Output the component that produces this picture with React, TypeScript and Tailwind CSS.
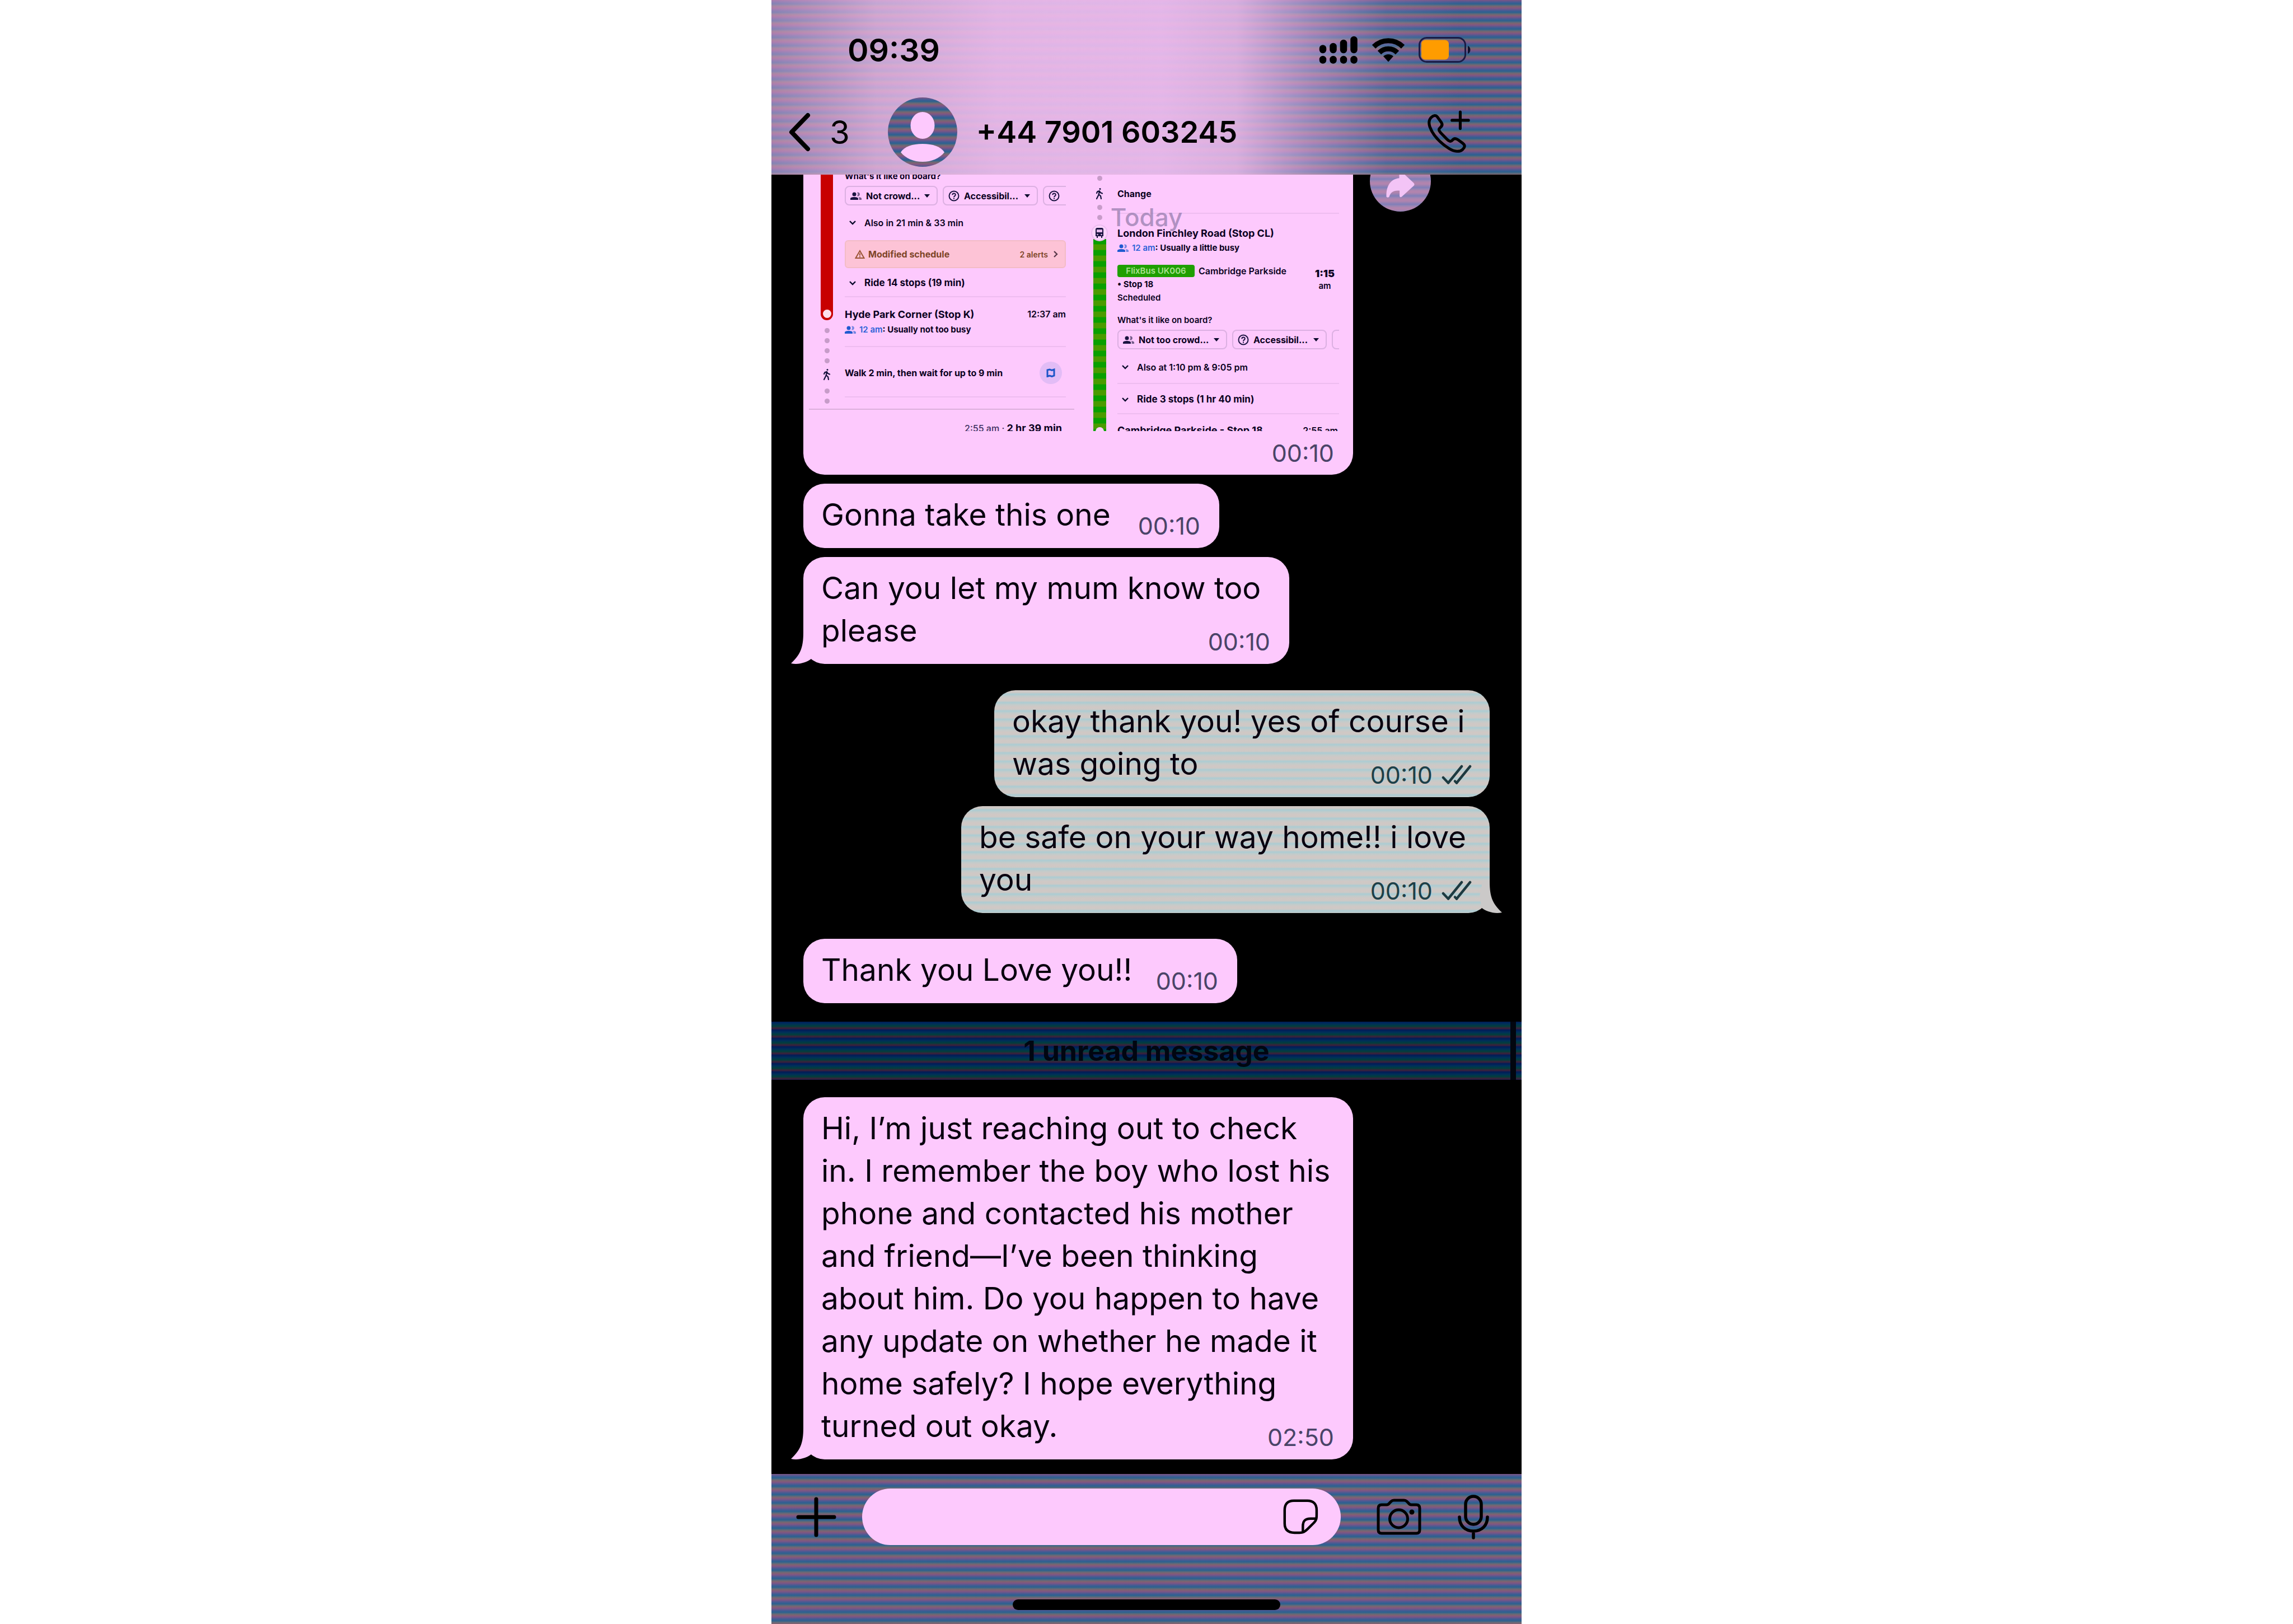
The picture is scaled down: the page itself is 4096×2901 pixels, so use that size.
import type { ReactNode } from "react";

const STRIPES =
  "bg-[repeating-linear-gradient(180deg,#7f5585_0px,#455b94_4px,#2a628f_7px,#5f6a7a_10px,#80636f_12px,#7f5585_15px)]";
const SENT_STRIPES =
  "bg-[repeating-linear-gradient(180deg,#d0c8c5_0px,#cdc9c6_4px,#abccd3_7px,#c4cbca_11px,#d0c8c5_15px)]";
const BAND_STRIPES =
  "bg-[repeating-linear-gradient(180deg,#001c58_0px,#00305a_4px,#003f3c_8px,#40203a_12px,#001c58_15px)]";

/* ---------- icons ---------- */

function SignalIcon() {
  return (
    <svg viewBox="0 0 70 50" className="h-[50px] w-[70px]" aria-hidden="true">
      <g stroke="#000" strokeWidth="12.5" strokeLinecap="round">
        <path d="M7 22.5V25M25.5 19V25M44 13V25M62.5 7V25" />
        <path d="M7 42V43.5M25.5 42V43.5M44 42V43.5M62.5 42V43.5" />
      </g>
    </svg>
  );
}

function WifiIcon() {
  return (
    <svg viewBox="0 0 60 44" className="h-[44px] w-[60px]" aria-hidden="true">
      <g fill="none" stroke="#000" strokeWidth="9">
        <path d="M4 16.500A37 37 0 0 1 56 16.500" />
        <path d="M14 27A22.500 22.500 0 0 1 46 27" />
      </g>
      <path d="M21 33.500A13 13 0 0 1 39 33.500L30 43.500Z" fill="#000" />
    </svg>
  );
}

function BatteryIcon() {
  return (
    <svg viewBox="0 0 94 46" className="h-[46px] w-[94px]" aria-hidden="true">
      <rect x="1.500" y="1.500" width="82" height="43" rx="13" fill="none" stroke="#1b1b45" strokeWidth="3" />
      <rect x="5" y="5.500" width="49" height="35" rx="7" fill="#ff9c00" />
      <path d="M88 16C94 18 94 28 88 30Z" fill="#10102c" />
    </svg>
  );
}

function CallAddIcon() {
  return (
    <svg viewBox="40 35 250 250" className="size-20" fill="none" stroke="#000" strokeWidth="16" strokeLinecap="round" strokeLinejoin="round" aria-hidden="true">
      <path d="M70 78C82 66 96 64 104 75L126 105C134 117 131 126 121 134C110 143 111 151 123 164L158 200C169 212 180 215 188 205C197 193 209 195 220 203L247 223C261 234 258 245 245 257C230 271 200 271 170 252C120 220 80 180 62 130C54 105 58 90 70 78Z" />
      <path d="M232 48V140M186 94H278" />
    </svg>
  );
}

function PersonAvatar() {
  return (
    <div className={`relative size-[124px] overflow-hidden rounded-full ${STRIPES}`}>
      <svg viewBox="0 0 124 124" className="size-full" aria-hidden="true">
        <ellipse cx="62" cy="50" rx="21.500" ry="24" fill="#fdc9fd" />
        <path d="M23 98C29 88 44 83 62 83S95 88 101 98C92 109 78 115 62 115S32 109 23 98Z" fill="#fdc9fd" />
      </svg>
    </div>
  );
}

function ForwardIcon() {
  return (
    <svg viewBox="110 -40 180 160" className="mt-2.5 h-[51px] w-[58px]" aria-hidden="true">
      <path d="M120 112C118 50 145 12 192 8V-28Q194 -38 204 -30L272 34Q282 44 272 52L206 112Q196 118 194 108V78C160 74 142 88 136 112Q128 120 120 112Z" fill="#f3c4f6" />
    </svg>
  );
}

function StickerIcon() {
  return (
    <svg viewBox="20 38 210 210" className="size-[67px]" fill="none" stroke="#000" strokeWidth="14" strokeLinejoin="round" aria-hidden="true">
      <path d="M35 105C35 72 52 53 86 53H162C196 53 214 72 214 105V130C214 155 212 162 200 175L164 211C146 229 137 232 118 232H90C52 232 35 214 35 180Z" />
      <path d="M214 153H180C150 153 137 166 137 196V230" />
    </svg>
  );
}

function CameraIcon() {
  return (
    <svg viewBox="0 0 80 66" className="h-[66px] w-20" fill="none" stroke="#000" strokeWidth="5" strokeLinejoin="round" aria-hidden="true">
      <path d="M3 17Q3 11 9 11H18Q21 11 23 8L26 5Q28 3 31 3H49Q52 3 54 5L57 8Q59 11 62 11H71Q77 11 77 17V56Q77 62 71 62H9Q3 62 3 56Z" />
      <circle cx="39.500" cy="36" r="16" />
      <circle cx="63" cy="24" r="4.500" fill="#000" stroke="none" />
    </svg>
  );
}

function MicIcon() {
  return (
    <svg viewBox="0 0 56 80" className="h-20 w-14" fill="none" stroke="#000" strokeWidth="5.500" strokeLinecap="round" aria-hidden="true">
      <rect x="14" y="3" width="28" height="50" rx="14" />
      <path d="M3 40C3 55 13 65 28 65S53 55 53 40M28 65V77" />
    </svg>
  );
}

function ChevronDown() {
  return (
    <svg viewBox="0 0 12 8" className="h-2 w-3" fill="none" stroke="#0a0a2c" strokeWidth="2.400" aria-hidden="true">
      <path d="M1 1L6 6L11 1" />
    </svg>
  );
}

function CaretDown() {
  return (
    <svg viewBox="0 0 10 6" className="h-1.5 w-2.5" aria-hidden="true">
      <path d="M0 0H10L5 6Z" fill="#0a0a2c" />
    </svg>
  );
}

function HelpIcon() {
  return (
    <svg viewBox="0 0 20 20" className="size-5 shrink-0" fill="none" stroke="#1a1440" strokeWidth="2" aria-hidden="true">
      <circle cx="10" cy="10" r="8.500" />
      <path d="M7.300 8.200C7.300 4.500 12.800 4.500 12.800 8C12.800 10 10 10.200 10 12.200M10 13.600V15.400" />
    </svg>
  );
}

function PeopleIcon({ className }: { className: string }) {
  return (
    <svg viewBox="0 0 20 14" className={`h-3.5 w-5 shrink-0 ${className}`} fill="currentColor" aria-hidden="true">
      <circle cx="7" cy="4" r="3.500" />
      <path d="M0 14V11.500C0 8 14 8 14 11.500V14Z" />
      <path d="M12 .8A3.500 3.500 0 1 1 12 7.200A5 5 0 0 0 12 .8ZM15.500 14V11C15.500 10 15 9.500 14.500 9C17 9.300 20 10 20 11.500V14Z" opacity=".6" />
    </svg>
  );
}

function WalkIcon() {
  return (
    <svg viewBox="0 0 16 22" className="h-[22px] w-4" fill="none" stroke="#14123c" strokeWidth="2.200" strokeLinecap="round" strokeLinejoin="round" aria-hidden="true">
      <circle cx="9" cy="2.500" r="1.500" fill="#14123c" stroke="none" />
      <path d="M3 10L4.500 7L8 6L9.500 9L13 10.500M8 6L6.500 13L3 20M7 12.500L10 15L11 20" />
    </svg>
  );
}

/* ---------- route screenshot ---------- */

function RouteChip({ icon, label, className }: { icon: ReactNode; label: string; className: string }) {
  return (
    <button type="button" className={`flex h-[35px] shrink-0 items-center rounded-lg border-2 border-[#dcb0e2] pl-2 font-bold ${className}`}>
      {icon}
      <span className="ml-2 flex-1 text-left whitespace-nowrap">{label}</span>
      <CaretDown />
    </button>
  );
}

function ExpandRow({ label, className }: { label: string; className: string }) {
  return (
    <div className={`flex items-center gap-[15px] pl-2 ${className}`}>
      <ChevronDown />
      <span>{label}</span>
    </div>
  );
}

function Dot() {
  return <i className="block size-[9px] shrink-0 rounded-full bg-[#c79cc9]" />;
}

function LeftRoute() {
  return (
    <div className="ml-2.5 w-[474px] shrink-0">
      <div className="flex h-[420px] border-b-2 border-[#dcb0dc]">
        <div className="flex w-16 flex-col items-center">
          <div className="flex h-[260px] w-[22px] items-end justify-center rounded-b-full bg-[#c80000] pb-1">
            <i className="block size-[15px] rounded-full bg-[#fde0ee]" />
          </div>
          <div className="mt-3.5 flex flex-col items-center gap-[9px]">
            <Dot />
            <Dot />
            <Dot />
            <Dot />
            <WalkIcon />
          </div>
          <div className="mt-3.5 flex flex-col items-center gap-[9px]">
            <Dot />
            <Dot />
          </div>
        </div>
        <div className="w-[395px] text-[16px]">
          <div className="h-5 overflow-hidden">
            <p className="-mt-2 text-[15px] leading-[22px] font-bold">What's it like on board?</p>
          </div>
          <div className="flex gap-[9px] overflow-hidden">
            <RouteChip icon={<PeopleIcon className="text-[#1a1440]" />} label="Not crowd..." className="w-[166px] pr-3" />
            <RouteChip icon={<HelpIcon />} label="Accessibil..." className="w-[170px] pr-3" />
            <button type="button" aria-label="More options" className="flex h-[35px] w-20 shrink-0 items-center rounded-lg border-2 border-[#dcb0e2] pl-2">
              <HelpIcon />
            </button>
          </div>
          <ExpandRow label="Also in 21 min & 33 min" className="h-[62px] font-semibold" />
          <div className="flex h-[50px] items-center rounded-md border-2 border-[#f3bcc6] bg-[#fdc3d6] pr-3 pl-4 text-[#7d4527]">
            <svg viewBox="0 0 18 16" className="h-4 w-[18px]" fill="none" stroke="#9a5534" strokeWidth="2" aria-hidden="true">
              <path d="M9 2L16.500 15H1.500ZM9 6.500V10.500M9 11.500V13.500" />
            </svg>
            <span className="ml-1.5 flex-1 font-bold">Modified schedule</span>
            <span className="text-[14px] font-semibold">2 alerts</span>
            <svg viewBox="0 0 8 12" className="ml-2.5 h-3 w-2" fill="none" stroke="#5a3a4a" strokeWidth="2.400" aria-hidden="true">
              <path d="M1 1L6 6L1 11" />
            </svg>
          </div>
          <ExpandRow label="Ride 14 stops (19 min)" className="h-[52px] border-b-2 border-[#eebcf0] pt-1 text-[17px] font-bold" />
          <div className="flex h-[89px] justify-between border-b-2 border-[#eebcf0] pt-[17px] leading-[27px]">
            <div>
              <p className="text-[18px] font-bold">Hyde Park Corner (Stop K)</p>
              <p className="flex items-center text-[15px] font-bold">
                <PeopleIcon className="text-[#1f5ad0]" />
                <span className="ml-1.5 font-semibold text-[#2a62d8]">12 am</span>: Usually not too busy
              </p>
            </div>
            <span className="font-semibold">12:37 am</span>
          </div>
          <div className="flex h-[90px] items-center justify-between border-b-2 border-[#eebcf0] pt-1 pr-[7px] font-bold">
            <span>Walk 2 min, then wait for up to 9 min</span>
            <button type="button" aria-label="Map" className="flex size-10 items-center justify-center rounded-full bg-[#e2bcf6]">
              <svg viewBox="0 0 16 16" className="size-4" fill="none" stroke="#1c55c8" strokeWidth="3" aria-hidden="true">
                <path d="M2 3L6 2L10 3.500L14 2V13L10 14.500L6 13L2 14.500Z" />
              </svg>
            </button>
          </div>
        </div>
      </div>
      <p className="pr-[22px] text-right text-[16px] leading-[66px] font-medium text-[#3c3060]">
        2:55 am · <b className="text-[18px] text-[#0a0020]">2 hr 39 min</b>
      </p>
    </div>
  );
}

function RightRoute() {
  return (
    <div className="ml-[13px] flex w-[460px] shrink-0">
      <div className="flex w-16 flex-col items-center">
        <div className="mt-0.5 flex flex-col items-center">
          <Dot />
          <div className="mt-3 mb-[9px] flex gap-0.5">
            <WalkIcon />
          </div>
          <Dot />
          <i className="block h-[9px]" />
          <Dot />
        </div>
        <div className="z-10 mt-2 flex size-[30px] items-center justify-center rounded-full border-2 border-[#ecbcf0] bg-[#fdd4fd]">
          <svg viewBox="0 0 16 18" className="h-[18px] w-4" aria-hidden="true">
            <path d="M1 3Q1 0 4 0H12Q15 0 15 3V15H13V18H11V15H5V18H3V15H1Z" fill="#1a1440" />
            <path d="M3 3H13V8H3Z" fill="#e4b8ea" />
            <circle cx="4.500" cy="12" r="1.300" fill="#e4b8ea" />
            <circle cx="11.500" cy="12" r="1.300" fill="#e4b8ea" />
          </svg>
        </div>
        <div className="-mt-1 flex w-[23px] flex-1 items-end justify-center overflow-hidden bg-[repeating-linear-gradient(180deg,#0a9f00_0px,#0a9f00_9px,#4b9b00_10px,#4b9b00_19px,#0a9f00_20px)]">
          <i className="-mb-2 block size-[15px] rounded-full bg-[#fdd4fd]" />
        </div>
      </div>
      <div className="w-[396px] text-[16px]">
        <div className="flex h-[70px] items-center border-b-2 border-[#eebcf0] font-bold">Change</div>
        <div className="pt-[22px] leading-[26px] font-bold">
          <p className="text-[18px]">London Finchley Road (Stop CL)</p>
          <p className="flex items-center text-[15px]">
            <PeopleIcon className="text-[#1f5ad0]" />
            <span className="ml-1.5 font-semibold text-[#2a62d8]">12 am</span>: Usually a little busy
          </p>
        </div>
        <div className="mt-4 flex justify-between pr-2 text-[15px] leading-6 font-semibold">
          <div>
            <p className="flex items-center gap-[7px]">
              <span className="h-[22px] w-[138px] rounded-sm bg-[#1f9f00] text-center leading-[22px] text-[#a8e090]">FlixBus UK006</span>
              <span className="text-[16px]">Cambridge Parkside</span>
            </p>
            <p className="font-bold">• Stop 18</p>
            <p>Scheduled</p>
          </div>
          <p className="mt-1.5 text-center leading-[21px]">
            <b className="text-[18px]">1:15</b>
            <br />
            am
          </p>
        </div>
        <p className="mt-4 text-[15px] leading-6 font-semibold">What's it like on board?</p>
        <div className="mt-[5px] flex gap-[9px] overflow-hidden">
          <RouteChip icon={<PeopleIcon className="text-[#1a1440]" />} label="Not too crowd..." className="w-[196px] pr-3" />
          <RouteChip icon={<HelpIcon />} label="Accessibil..." className="w-[169px] pr-3" />
          <button type="button" aria-label="More options" className="h-[35px] w-20 shrink-0 rounded-lg border-2 border-[#dcb0e2]" />
        </div>
        <ExpandRow label="Also at 1:10 pm & 9:05 pm" className="h-[62px] border-b-2 border-[#eebcf0] pt-1 font-semibold" />
        <ExpandRow label="Ride 3 stops (1 hr 40 min)" className="h-[54px] border-b-2 border-[#eebcf0] pt-1 text-[17px] font-bold" />
        <p className="flex justify-between pr-0.5 leading-[58px] font-bold">
          <span className="text-[18px]">Cambridge Parkside - Stop 18</span>
          <span className="font-semibold">2:55 am</span>
        </p>
      </div>
    </div>
  );
}

/* ---------- bubbles ---------- */

function Tail({ side }: { side: "left" | "right" }) {
  return (
    <svg
      viewBox="0 0 60 60"
      aria-hidden="true"
      className={side === "left" ? "absolute bottom-0 -left-[22px] size-[60px] text-[#fdc9fd]" : "absolute -right-[22px] bottom-0 size-[60px] -scale-x-100 text-[#cbc9c8]"}
    >
      <path d="M22 4C22 32 16 44 0 59C14 62 28 57 36 51L40 30L34 0Z" fill="currentColor" />
    </svg>
  );
}

function Ticks() {
  return (
    <svg viewBox="0 0 54 36" className="h-9 w-[54px]" fill="none" stroke="#1d3a40" strokeWidth="4.500" strokeLinecap="round" strokeLinejoin="round" aria-hidden="true">
      <path d="M3 23L12 32.500L36 3M27 32.500L51 3" />
      <path d="M27 32.500L24 29.500" />
    </svg>
  );
}

type MessageProps = {
  lines: string[];
  time: string;
  sent?: boolean;
  tail?: boolean;
  className: string;
};

function Message({ lines, time, sent, tail, className }: MessageProps) {
  return (
    <article
      className={`relative grid rounded-[38px] pr-9 pl-8 ${sent ? `self-end ${SENT_STRIPES}` : "self-start bg-[#fdc9fd]"} ${className}`}
    >
      {tail && <Tail side={sent ? "right" : "left"} />}
      <p className="relative col-start-1 row-start-1 pt-[17px] pb-[22px] text-[55px] leading-[76px] whitespace-nowrap text-[#08000f]">
        {lines.map((line) => (
          <span key={line} className="block">
            {line}
          </span>
        ))}
      </p>
      <div className={`relative col-start-1 row-start-1 mb-[18px] flex items-center gap-4 self-end justify-self-end text-[43px] leading-[44px] ${sent ? "-mr-1 text-[#1d4048]" : "-mr-0.5 text-[#4a4468]"}`}>
        <time>{time}</time>
        {sent && <Ticks />}
      </div>
    </article>
  );
}

/* ---------- screen ---------- */

export default function App() {
  return (
    <div className="min-h-screen bg-white font-['Inter',sans-serif]">
      <div className="mx-auto flex min-h-screen w-full max-w-[1340px] flex-col bg-black">
        <header className={STRIPES}>
          <div className="h-[312px] bg-[linear-gradient(90deg,rgba(218,164,212,0.5)_0%,rgba(236,186,230,0.78)_14%,rgba(240,190,238,0.9)_30%,rgba(240,190,240,0.92)_52%,rgba(238,188,236,0.85)_62%,rgba(220,170,222,0.55)_72%,rgba(190,150,200,0.2)_82%,rgba(190,150,200,0)_92%)]">
            <div className="flex h-[178px] items-center justify-between pr-[90px] pl-[136px]">
              <time className="text-[57px] leading-none font-semibold">09:39</time>
              <div className="flex items-center gap-6">
                <SignalIcon />
                <WifiIcon />
                <BatteryIcon />
              </div>
            </div>
            <div className="flex h-[116px] items-center pr-[91px] pl-7">
              <button type="button" className="flex items-center gap-8 text-[58px] leading-none">
                <svg viewBox="0 0 44 70" className="h-[70px] w-11" fill="none" stroke="#000" strokeWidth="8" strokeLinecap="round" strokeLinejoin="round" aria-hidden="true">
                  <path d="M37 5L8 35L37 65" />
                </svg>
                3
              </button>
              <div className="ml-[68px] flex flex-1 items-center gap-[34px]">
                <PersonAvatar />
                <h1 className="text-[54px] leading-none font-semibold">+44 7901 603245</h1>
              </div>
              <button type="button" aria-label="Add to call">
                <CallAddIcon />
              </button>
            </div>
          </div>
        </header>

        <main className="relative flex flex-1 flex-col overflow-hidden px-[57px] pb-[26px]">
          <article className="relative h-[536px] w-[982px] self-start rounded-b-[38px] bg-[#fdc9fd] text-[#0a0020]">
            <div className="flex h-[458px] overflow-hidden">
              <LeftRoute />
              <RightRoute />
            </div>
            <time className="mt-[17px] mr-[34px] block text-right text-[43px] leading-[44px] text-[#4a4468]">00:10</time>
          </article>
          <button type="button" aria-label="Forward" className="absolute -top-[43px] left-[1069px] flex size-[109px] items-center justify-center rounded-full bg-[repeating-linear-gradient(180deg,#b184ae_0px,#7f7fb8_6px,#9a86b4_9px,#b184ae_12px,#b184ae_15px)]">
            <ForwardIcon />
          </button>
          <span className="absolute top-12 left-1/2 -translate-x-1/2 text-[44px] leading-[56px] font-medium text-[#8f78a8]/70">Today</span>

          <Message lines={["Gonna take this one"]} time="00:10" className="mt-4 w-[743px]" />
          <Message lines={["Can you let my mum know too", "please"]} time="00:10" tail className="mt-4 w-[868px]" />
          <Message lines={["okay thank you! yes of course i", "was going to"]} time="00:10" sent className="mt-[47px] w-[885px]" />
          <Message lines={["be safe on your way home!! i love", "you"]} time="00:10" sent tail className="mt-4 w-[944px]" />
          <Message lines={["Thank you Love you!!"]} time="00:10" className="mt-[46px] w-[775px]" />

          <div className={`-mx-[57px] mt-[33px] flex h-[104px] items-center ${BAND_STRIPES}`}>
            <h2 className="ml-5 flex-1 text-center text-[50px] leading-none font-bold text-[#010611]">1 unread message</h2>
            <i className="mr-2.5 h-full w-2.5 bg-[#02060f]" />
          </div>

          <Message
            lines={[
              "Hi, I’m just reaching out to check",
              "in. I remember the boy who lost his",
              "phone and contacted his mother",
              "and friend—I’ve been thinking",
              "about him. Do you happen to have",
              "any update on whether he made it",
              "home safely? I hope everything",
              "turned out okay.",
            ]}
            time="02:50"
            tail
            className="mt-[31px] w-[982px]"
          />
        </main>

        <footer className={`flex h-[268px] flex-col items-center pt-[26px] ${STRIPES}`}>
          <form className="flex w-full items-center pr-[58px] pl-[44px]">
            <button type="button" aria-label="Attach" className="shrink-0">
              <svg viewBox="0 0 72 72" className="size-[72px]" stroke="#000" strokeWidth="7" strokeLinecap="round" aria-hidden="true">
                <path d="M36 4V68M4 36H68" />
              </svg>
            </button>
            <div className="ml-[46px] flex h-[101px] min-w-0 flex-1 items-center rounded-full bg-[#fdc9fd] pr-[38px] pl-10">
              <input type="text" aria-label="Message" className="w-0 min-w-0 flex-1 bg-transparent text-[55px] outline-none" />
              <button type="button" aria-label="Stickers" className="shrink-0">
                <StickerIcon />
              </button>
            </div>
            <button type="button" aria-label="Camera" className="ml-16 shrink-0">
              <CameraIcon />
            </button>
            <button type="button" aria-label="Voice message" className="ml-[65px] shrink-0">
              <MicIcon />
            </button>
          </form>
          <div className="mt-[97px] h-[19px] w-[478px] rounded-full bg-black" />
        </footer>
      </div>
    </div>
  );
}
